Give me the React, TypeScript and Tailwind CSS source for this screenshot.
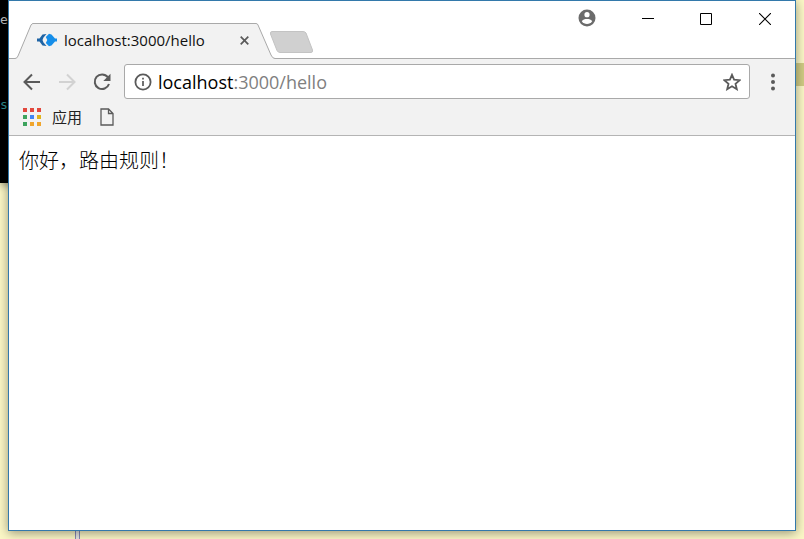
import type { ReactNode } from "react";

const appColors = [
   "#e2483d", "#e2483d", "#e2483d",
   "#3da35d", "#4285f4", "#e0b41c",
   "#3da35d", "#f0a52c", "#f0a52c",
];

function IconButton({ label, children, className = "" }: { label: string; children: ReactNode; className?: string }) {
   return (
      <button type="button" aria-label={label} className={`flex shrink-0 items-center justify-center ${className}`}>
         {children}
      </button>
   );
}

function Desktop() {
   return (
      <div className="absolute inset-0 overflow-hidden bg-[#fbf7c6]" aria-hidden="true">
         <div className="absolute left-0 top-0 h-[183px] w-10 bg-black font-['DejaVu_Sans_Mono',monospace] text-[13px] leading-5 shadow-[0_2px_8px_rgba(0,0,0,0.4)]">
            <span className="absolute left-0 top-2.5 text-[#c0c0c0]">e</span>
            <span className="absolute left-0 top-[95px] text-[#2f8f8f]">s</span>
         </div>
         <div className="absolute right-0 top-[63px] h-[23px] w-10 bg-[#d0cb84]" />
         <div className="absolute bottom-0 left-[75px] h-10 w-[5px] border-x border-[#8587b5] bg-[#e4e4e0]" />
      </div>
   );
}

function Tab() {
   return (
      <div className="relative -mb-px ml-1.5 flex h-9 w-[260px] items-center pb-0.5 pl-[22px] pr-[23px]">
         <svg className="absolute inset-0 h-full w-full" viewBox="0 0 260 36" aria-hidden="true">
            <path d="M0 36V35.5Q2 35.5 3 33L16 2Q17 .5 18 .5H241Q242.500 .5 243 2L256 32Q257.500 35.500 260 35.500V36Z" fill="#f2f2f2" />
            <path d="M0 35.500Q2 35.500 3 33L16 2Q17 .5 18 .5H241Q242.500 .5 243 2L256 32Q257.500 35.500 260 35.500" fill="none" stroke="#a9a9a9" />
         </svg>
         <svg className="relative h-3.5 w-5 shrink-0" viewBox="0 0 20 14" aria-hidden="true">
            <path d="M0 5.600H2.500L5.500 1.500L9.500 1L6.500 4.500L5.500 7L6.500 9.500L9.500 13L5.500 12.500L2.500 8.400H0Z" fill="#1f64a5" />
            <path d="M12 .7L14.500 1.500L18 5.600H20V8.400H18L14.500 12.500L12 13.300L8.800 10L10.300 7L8.800 4Z" fill="#168ee9" />
         </svg>
         <span className="relative ml-[7px] grow text-[15px] leading-5 text-[#111]">localhost:3000/hello</span>
         <IconButton label="Close tab" className="relative h-4 w-4">
            <svg className="h-[9px] w-[9px]" viewBox="0 0 9 9">
               <path d="M.7 .7L8.300 8.300M8.300 .7L.7 8.300" stroke="#5a5a5a" strokeWidth="1.700" />
            </svg>
         </IconButton>
      </div>
   );
}

function TitleBar() {
   return (
      <header className="flex h-[58px] items-end justify-between border-b border-[#a9a9a9] bg-white">
         <div className="flex items-end">
            <Tab />
            <IconButton label="New tab" className="-ml-1.5 mb-1">
               <svg className="h-[23px] w-[45px]" viewBox="0 0 45 23">
                  <path d="M3 .5H34Q36 .5 37 2L43.500 19Q44 21.500 42 21.500H11Q9 21.500 8 19.500L1.500 3Q1 .5 3 .5Z" fill="#d0d0d0" stroke="#c3c3c3" />
               </svg>
            </IconButton>
         </div>
         <div className="flex self-start">
            <IconButton label="Profile" className="h-[34px] w-16">
               <svg className="h-[18px] w-[18px]" viewBox="0 0 18 18">
                  <circle cx="9" cy="9" r="8.500" fill="#6b6b6b" />
                  <circle cx="9" cy="5.700" r="2.600" fill="white" />
                  <path d="M3.800 12.200C4.500 10.500 7 9.900 9 9.900S13.500 10.500 14.200 12.200A6.300 6.300 0 0 1 3.800 12.200Z" fill="white" />
               </svg>
            </IconButton>
            <IconButton label="Minimize" className="h-[34px] w-[58px]">
               <svg className="h-3 w-3" viewBox="0 0 12 12"><path d="M0 6.500H12" stroke="black" /></svg>
            </IconButton>
            <IconButton label="Maximize" className="h-9 w-[58px]">
               <svg className="h-3 w-3" viewBox="0 0 12 12"><path d="M.5 .5H11.500V11.500H.5Z" fill="none" stroke="black" /></svg>
            </IconButton>
            <IconButton label="Close" className="h-9 w-[60px]">
               <svg className="h-3 w-3" viewBox="0 0 12 12"><path d="M0 0L12 12M12 0L0 12" stroke="black" strokeWidth="1.100" /></svg>
            </IconButton>
         </div>
      </header>
   );
}

function Toolbar() {
   return (
      <div className="flex h-[41px] items-center pt-1 pl-[13px]">
         <div className="flex gap-[15px]">
            <IconButton label="Back" className="h-5 w-5">
               <svg className="h-[18px] w-[18px]" viewBox="0 0 18 18">
                  <path d="M17 9H2M9 1.500L1.500 9L9 16.500" fill="none" stroke="#5a5a5a" strokeWidth="2" />
               </svg>
            </IconButton>
            <IconButton label="Forward" className="h-5 w-5">
               <svg className="h-[18px] w-[18px]" viewBox="0 0 18 18">
                  <path d="M1 9H16M9 1.500L16.500 9L9 16.500" fill="none" stroke="#d2d2d2" strokeWidth="2" />
               </svg>
            </IconButton>
            <IconButton label="Reload" className="h-5 w-5">
               <svg className="h-[18px] w-[18px]" viewBox="0 0 18 18">
                  <path d="M14.800 4.200A7.300 7.300 0 1 0 16 11" fill="none" stroke="#5a5a5a" strokeWidth="2" />
                  <path d="M17.500 .8V8H10.300Z" fill="#5a5a5a" />
               </svg>
            </IconButton>
         </div>
         <div className="ml-3 flex h-[35px] grow items-center rounded-[3px] border border-[#a9a9a9] bg-white px-2">
            <IconButton label="Site information" className="h-5 w-5">
               <svg className="h-[18px] w-[18px]" viewBox="0 0 18 18">
                  <circle cx="9" cy="9" r="7.600" fill="none" stroke="#5a5a5a" strokeWidth="1.800" />
                  <path d="M9 8V13M9 4.800V6.500" stroke="#5a5a5a" strokeWidth="1.700" />
               </svg>
            </IconButton>
            <div role="textbox" aria-label="Address" tabIndex={0} contentEditable suppressContentEditableWarning className="ml-[5px] grow text-lg leading-6 text-[#808080] outline-none">
               <span className="text-black">localhost</span>:3000/hello
            </div>
            <IconButton label="Bookmark this page" className="h-[18px] w-[18px]">
               <svg className="h-[18px] w-[18px]" viewBox="0 0 18 18">
                  <path d="M9 1.800L11.100 6.700L16.700 7.200L12.500 10.800L13.800 16.200L9 13.300L4.200 16.200L5.500 10.800L1.300 7.200L6.900 6.700Z" fill="none" stroke="#5a5a5a" strokeWidth="1.800" />
               </svg>
            </IconButton>
         </div>
         <IconButton label="Menu" className="h-8 w-[45px]">
            <svg className="h-[18px] w-1" viewBox="0 0 4 18" fill="#5a5a5a">
               <circle cx="2" cy="2.500" r="2" />
               <circle cx="2" cy="9" r="2" />
               <circle cx="2" cy="15.500" r="2" />
            </svg>
         </IconButton>
      </div>
   );
}

function Bookmarks() {
   return (
      <nav className="flex h-9 items-center border-b border-[#b4b4b4] pb-0.5 pl-3.5">
         <button type="button" className="flex items-center gap-[11px] text-[15px] leading-5 text-[#222]">
            <svg className="h-[18px] w-[18px]" viewBox="0 0 18 18" aria-hidden="true">
               {appColors.map((color, i) => (
                  <rect key={i} x={(i % 3) * 7} y={Math.floor(i / 3) * 7} width="4" height="4" fill={color} />
               ))}
            </svg>
            应用
         </button>
         <IconButton label="Bookmark" className="ml-[18px]">
            <svg className="h-[18px] w-3.5" viewBox="0 0 14 18">
               <path d="M1 1H8.500L13 5.500V17H1ZM8.500 1V5.500H13" fill="none" stroke="#5a5a5a" strokeWidth="1.300" />
            </svg>
         </IconButton>
      </nav>
   );
}

export default function App() {
   return (
      <div className="relative flex h-screen flex-col px-2 pb-2 font-['Open_Sans','Noto_Sans_CJK_SC',sans-serif]">
         <Desktop />
         <div className="relative flex grow flex-col border border-[#3379ab] bg-white shadow-[0_2px_10px_rgba(0,0,0,0.4)]">
            <TitleBar />
            <div className="bg-[#f2f2f2]">
               <Toolbar />
               <Bookmarks />
            </div>
            <main className="px-2.5 py-2.5 font-['Noto_Sans_CJK_SC',sans-serif] text-xl leading-7 font-light text-black">
               你好，路由规则！
            </main>
         </div>
      </div>
   );
}
